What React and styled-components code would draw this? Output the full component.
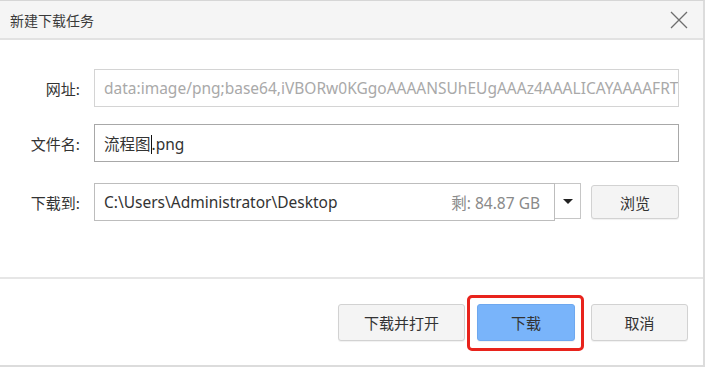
import React from 'react';
import styled, { createGlobalStyle } from 'styled-components';

const GlobalStyle = createGlobalStyle`
  html, body {
    margin: 0;
    padding: 0;
    background: #ffffff;
  }
  body {
    font-family: "Noto Sans", "Noto Sans CJK SC", sans-serif;
  }
`;

const Window = styled.div`
  width: 705px;
  height: 367px;
  box-sizing: border-box;
  border-top: 1px solid #d6d6d6;
  border-right: 2px solid #dcdcdc;
  border-bottom: 2px solid #dcdcdc;
  display: flex;
  flex-direction: column;
  background: #ffffff;
  overflow: hidden;
`;

const TitleBar = styled.div`
  height: 37px;
  flex-shrink: 0;
  background: #f5f5f5;
  border-bottom: 2px solid #e2e2e2;
  display: flex;
  align-items: center;
  justify-content: space-between;
  padding: 0 14px 0 10px;
`;

const Title = styled.span`
  font-size: 14px;
  color: #3a3a3a;
  font-family: "Noto Sans CJK SC", sans-serif;
`;

const CloseButton = styled.button`
  width: 20px;
  height: 20px;
  padding: 0;
  border: none;
  background: transparent;
  display: flex;
  align-items: center;
  justify-content: center;
`;

const Body = styled.div`
  flex: 1;
  display: flex;
  flex-direction: column;
  gap: 19px;
  padding: 29px 0 0 0;
  border-bottom: 2px solid #e6e6e6;
`;

const Row = styled.div`
  display: flex;
  align-items: center;
  height: 38px;
  margin-top: ${p => p.$shift || 0}px;
`;

const Label = styled.label`
  width: 80px;
  margin-right: 14px;
  text-align: right;
  font-size: 15px;
  color: #333;
  font-family: "Noto Sans CJK SC", sans-serif;
`;

const Field = styled.div`
  box-sizing: border-box;
  width: ${p => p.$width}px;
  height: 38px;
  border: 1px solid ${p => p.$border};
  display: flex;
  align-items: center;
  justify-content: space-between;
  padding: 0 14px 0 9px;
  font-size: 15.5px;
  color: ${p => p.$color};
  white-space: nowrap;
  overflow: hidden;
  font-family: "Noto Sans", "Noto Sans CJK SC", sans-serif;
`;

const Caret = styled.span`
  display: inline-block;
  width: 1px;
  height: 19px;
  background: #111;
  vertical-align: -4px;
`;

const Free = styled.span`
  color: #8a8a8a;
  font-size: 15.5px;
`;

const DropToggle = styled.div`
  box-sizing: border-box;
  width: 26px;
  height: 36px;
  align-self: flex-start;
  border: 1px solid #c6c6c6;
  border-left: none;
  display: flex;
  align-items: center;
  justify-content: center;
`;

const Arrow = styled.span`
  width: 0;
  height: 0;
  border-left: 5px solid transparent;
  border-right: 5px solid transparent;
  border-top: 5px solid #222;
`;

const Footer = styled.div`
  height: 86px;
  flex-shrink: 0;
  display: flex;
  align-items: center;
  justify-content: flex-end;
  padding-right: 15px;
`;

const Button = styled.button`
  box-sizing: border-box;
  width: ${p => p.$width}px;
  height: ${p => p.$height || 37}px;
  margin-left: ${p => p.$gap || 0}px;
  border: 1px solid ${p => (p.$primary ? '#6ea8ef' : '#d2d2d2')};
  border-radius: 3px;
  background: ${p => (p.$primary ? '#79b4fa' : '#f4f4f4')};
  color: #333;
  font-size: 15px;
  font-family: "Noto Sans CJK SC", sans-serif;
  padding: 0;
  box-shadow: 0 1px 1px rgba(0, 0, 0, 0.06);
`;

const Highlight = styled.div`
  position: relative;
  margin-left: 12px;
  &::after {
    content: '';
    position: absolute;
    left: -10px;
    right: -9px;
    top: -9px;
    bottom: -10px;
    border: 3px solid #e8231c;
    border-radius: 5px;
    pointer-events: none;
  }
`;

export default function App() {
  return (
    <>
      <GlobalStyle />
      <Window>
        <TitleBar>
          <Title>新建下载任务</Title>
          <CloseButton aria-label="关闭">
            <svg width="18" height="18" viewBox="0 0 18 18">
              <path d="M1 1 L17 17 M17 1 L1 17" stroke="#6e6e6e" strokeWidth="1.3" fill="none" />
            </svg>
          </CloseButton>
        </TitleBar>
        <Body>
          <Row>
            <Label>网址:</Label>
            <Field $width={585} $border="#d4d4d4" $color="#a9a9a9">
              data:image/png;base64,iVBORw0KGgoAAAANSUhEUgAAAz4AAALICAYAAAAFRT
            </Field>
          </Row>
          <Row $shift={-2}>
            <Label>文件名:</Label>
            <Field $width={585} $border="#a8a8a8" $color="#333">
              <span>
                流程图<Caret />.png
              </span>
            </Field>
          </Row>
          <Row $shift={2}>
            <Label>下载到:</Label>
            <Field $width={461} $border="#bdbdbd" $color="#333">
              <span>C:\Users\Administrator\Desktop</span>
              <Free>剩: 84.87 GB</Free>
            </Field>
            <DropToggle>
              <Arrow />
            </DropToggle>
            <Button $width={88} $height={34} $gap={10}>浏览</Button>
          </Row>
        </Body>
        <Footer>
          <Button $width={127}>下载并打开</Button>
          <Highlight>
            <Button $width={98} $primary>下载</Button>
          </Highlight>
          <Button $width={97} $gap={16}>取消</Button>
        </Footer>
      </Window>
    </>
  );
}
